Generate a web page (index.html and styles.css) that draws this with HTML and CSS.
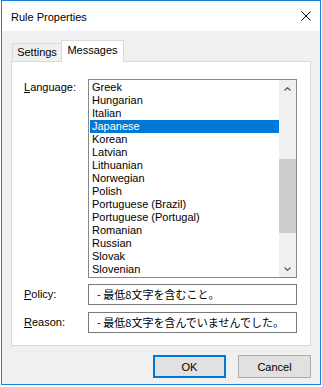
FILE: index.html
```html
<!DOCTYPE html>
<html>
<head>
<meta charset="utf-8">
<title>Rule Properties</title>
<link rel="stylesheet" href="styles.css">
</head>
<body>
<div class="window">
  <div class="titlebar">
    <span class="title">Rule Properties</span>
    <svg class="close" width="10" height="10" viewBox="0 0 10 10"><path d="M0.5 0.5 L9.5 9.5 M9.5 0.5 L0.5 9.5" stroke="#000" stroke-width="1" fill="none"/></svg>
  </div>
  <div class="client">
    <div class="tabs">
      <div class="tab">Settings</div>
      <div class="tab active">Messages</div>
    </div>
    <div class="panel">
      <div class="row row-lang">
        <label class="label"><u>L</u>anguage:</label>
        <div class="listbox">
          <ul class="items">
            <li>Greek</li>
            <li>Hungarian</li>
            <li>Italian</li>
            <li class="selected">Japanese</li>
            <li>Korean</li>
            <li>Latvian</li>
            <li>Lithuanian</li>
            <li>Norwegian</li>
            <li>Polish</li>
            <li>Portuguese (Brazil)</li>
            <li>Portuguese (Portugal)</li>
            <li>Romanian</li>
            <li>Russian</li>
            <li>Slovak</li>
            <li>Slovenian</li>
          </ul>
          <div class="scrollbar">
            <div class="sb-btn"><svg width="7" height="4" viewBox="0 0 7 4"><path d="M0.5 3.5 L3.5 0.7 L6.5 3.5" stroke="#606060" stroke-width="1.3" fill="none"/></svg></div>
            <div class="sb-track"><div class="sb-thumb"></div></div>
            <div class="sb-btn"><svg width="7" height="4" viewBox="0 0 7 4"><path d="M0.5 0.5 L3.5 3.3 L6.5 0.5" stroke="#606060" stroke-width="1.3" fill="none"/></svg></div>
          </div>
        </div>
      </div>
      <div class="row row-field row-policy">
        <label class="label"><u>P</u>olicy:</label>
        <div class="field">- 最低8文字を含むこと。</div>
      </div>
      <div class="row row-field row-reason">
        <label class="label"><u>R</u>eason:</label>
        <div class="field">- 最低8文字を含んでいませんでした。</div>
      </div>
    </div>
    <div class="buttons">
      <button class="btn default">OK</button>
      <button class="btn">Cancel</button>
    </div>
  </div>
</div>
</body>
</html>
```
FILE: styles.css
```css
* { box-sizing: border-box; }
html, body { margin: 0; padding: 0; background: #ffffff; }
body {
  font-family: "Liberation Sans", Arial, sans-serif;
  font-size: 11px;
  color: #000;
}
.window {
  width: 320px;
  height: 385px;
  margin: 0 0 0 1px;
  border: 1px solid #1883d7;
  background: #f0f0f0;
  display: flex;
  flex-direction: column;
}
.titlebar {
  height: 30px;
  background: #ffffff;
  display: flex;
  align-items: center;
  padding: 2px 0 0 9px;
  flex: none;
}
.title { line-height: 13px; }
.close { margin-left: auto; margin-right: 9px; margin-top: -2px; display: block; }
.client {
  flex: 1;
  padding: 9px 9px 0 9px;
  display: flex;
  flex-direction: column;
}
.tabs {
  height: 21px;
  display: flex;
  align-items: flex-end;
  flex: none;
}
.tab {
  border: 1px solid #d9d9d9;
  border-bottom: none;
  background: #f0f0f0;
  text-align: center;
  line-height: 13px;
}
.tab:first-child {
  margin-left: 1px;
  width: 50px;
  height: 18px;
  padding-top: 2px;
}
.tab.active {
  margin-left: -1px;
  width: 63px;
  height: 22px;
  margin-bottom: -1px;
  padding-top: 3px;
  background: #ffffff;
  position: relative;
  z-index: 1;
}
.panel {
  height: 285px;
  background: #ffffff;
  border: 1px solid #d9d9d9;
  padding: 17px 13px 12px 0;
  display: flex;
  flex-direction: column;
  flex: none;
}
.row { display: flex; }
.label {
  width: 76px;
  padding-left: 12px;
  line-height: 13px;
  flex: none;
}
.row-lang .label { padding-top: 2px; }
.row-field { align-items: center; }
.row-policy { margin-top: 6px; }
.row-reason { margin-top: 7px; }
.listbox {
  width: 209px;
  height: 199px;
  border: 1px solid #828790;
  background: #fff;
  display: flex;
}
.items {
  flex: 1;
  list-style: none;
  margin: 0;
  padding: 1px 0 1px 1px;
}
.items li {
  height: 13px;
  line-height: 13px;
  padding-left: 2px;
  white-space: nowrap;
}
.items li.selected { background: #0078d7; color: #fff; }
.scrollbar {
  width: 17px;
  background: #f0f0f0;
  display: flex;
  flex-direction: column;
}
.sb-btn {
  height: 17px;
  display: flex;
  align-items: center;
  justify-content: center;
  flex: none;
}
.sb-btn svg { display: block; }
.sb-track { flex: 1; }
.sb-thumb {
  margin-top: 62px;
  height: 74px;
  background: #cdcdcd;
}
.field {
  width: 209px;
  height: 21px;
  border: 1px solid #7a7a7a;
  background: #fff;
  padding-left: 8px;
  font-family: "Noto Sans CJK JP", "Liberation Sans", sans-serif;
  font-size: 11px;
  line-height: 19px;
  white-space: pre;
  overflow: hidden;
}
.buttons {
  display: flex;
  justify-content: flex-end;
  gap: 12px;
  margin-top: 9px;
  flex: none;
}
.btn {
  width: 73px;
  height: 23px;
  background: #e1e1e1;
  border: 1px solid #adadad;
  font-family: inherit;
  font-size: 11px;
  color: #000;
  padding: 0;
  margin: 0;
}
.btn.default { border: 2px solid #0078d7; }
```
